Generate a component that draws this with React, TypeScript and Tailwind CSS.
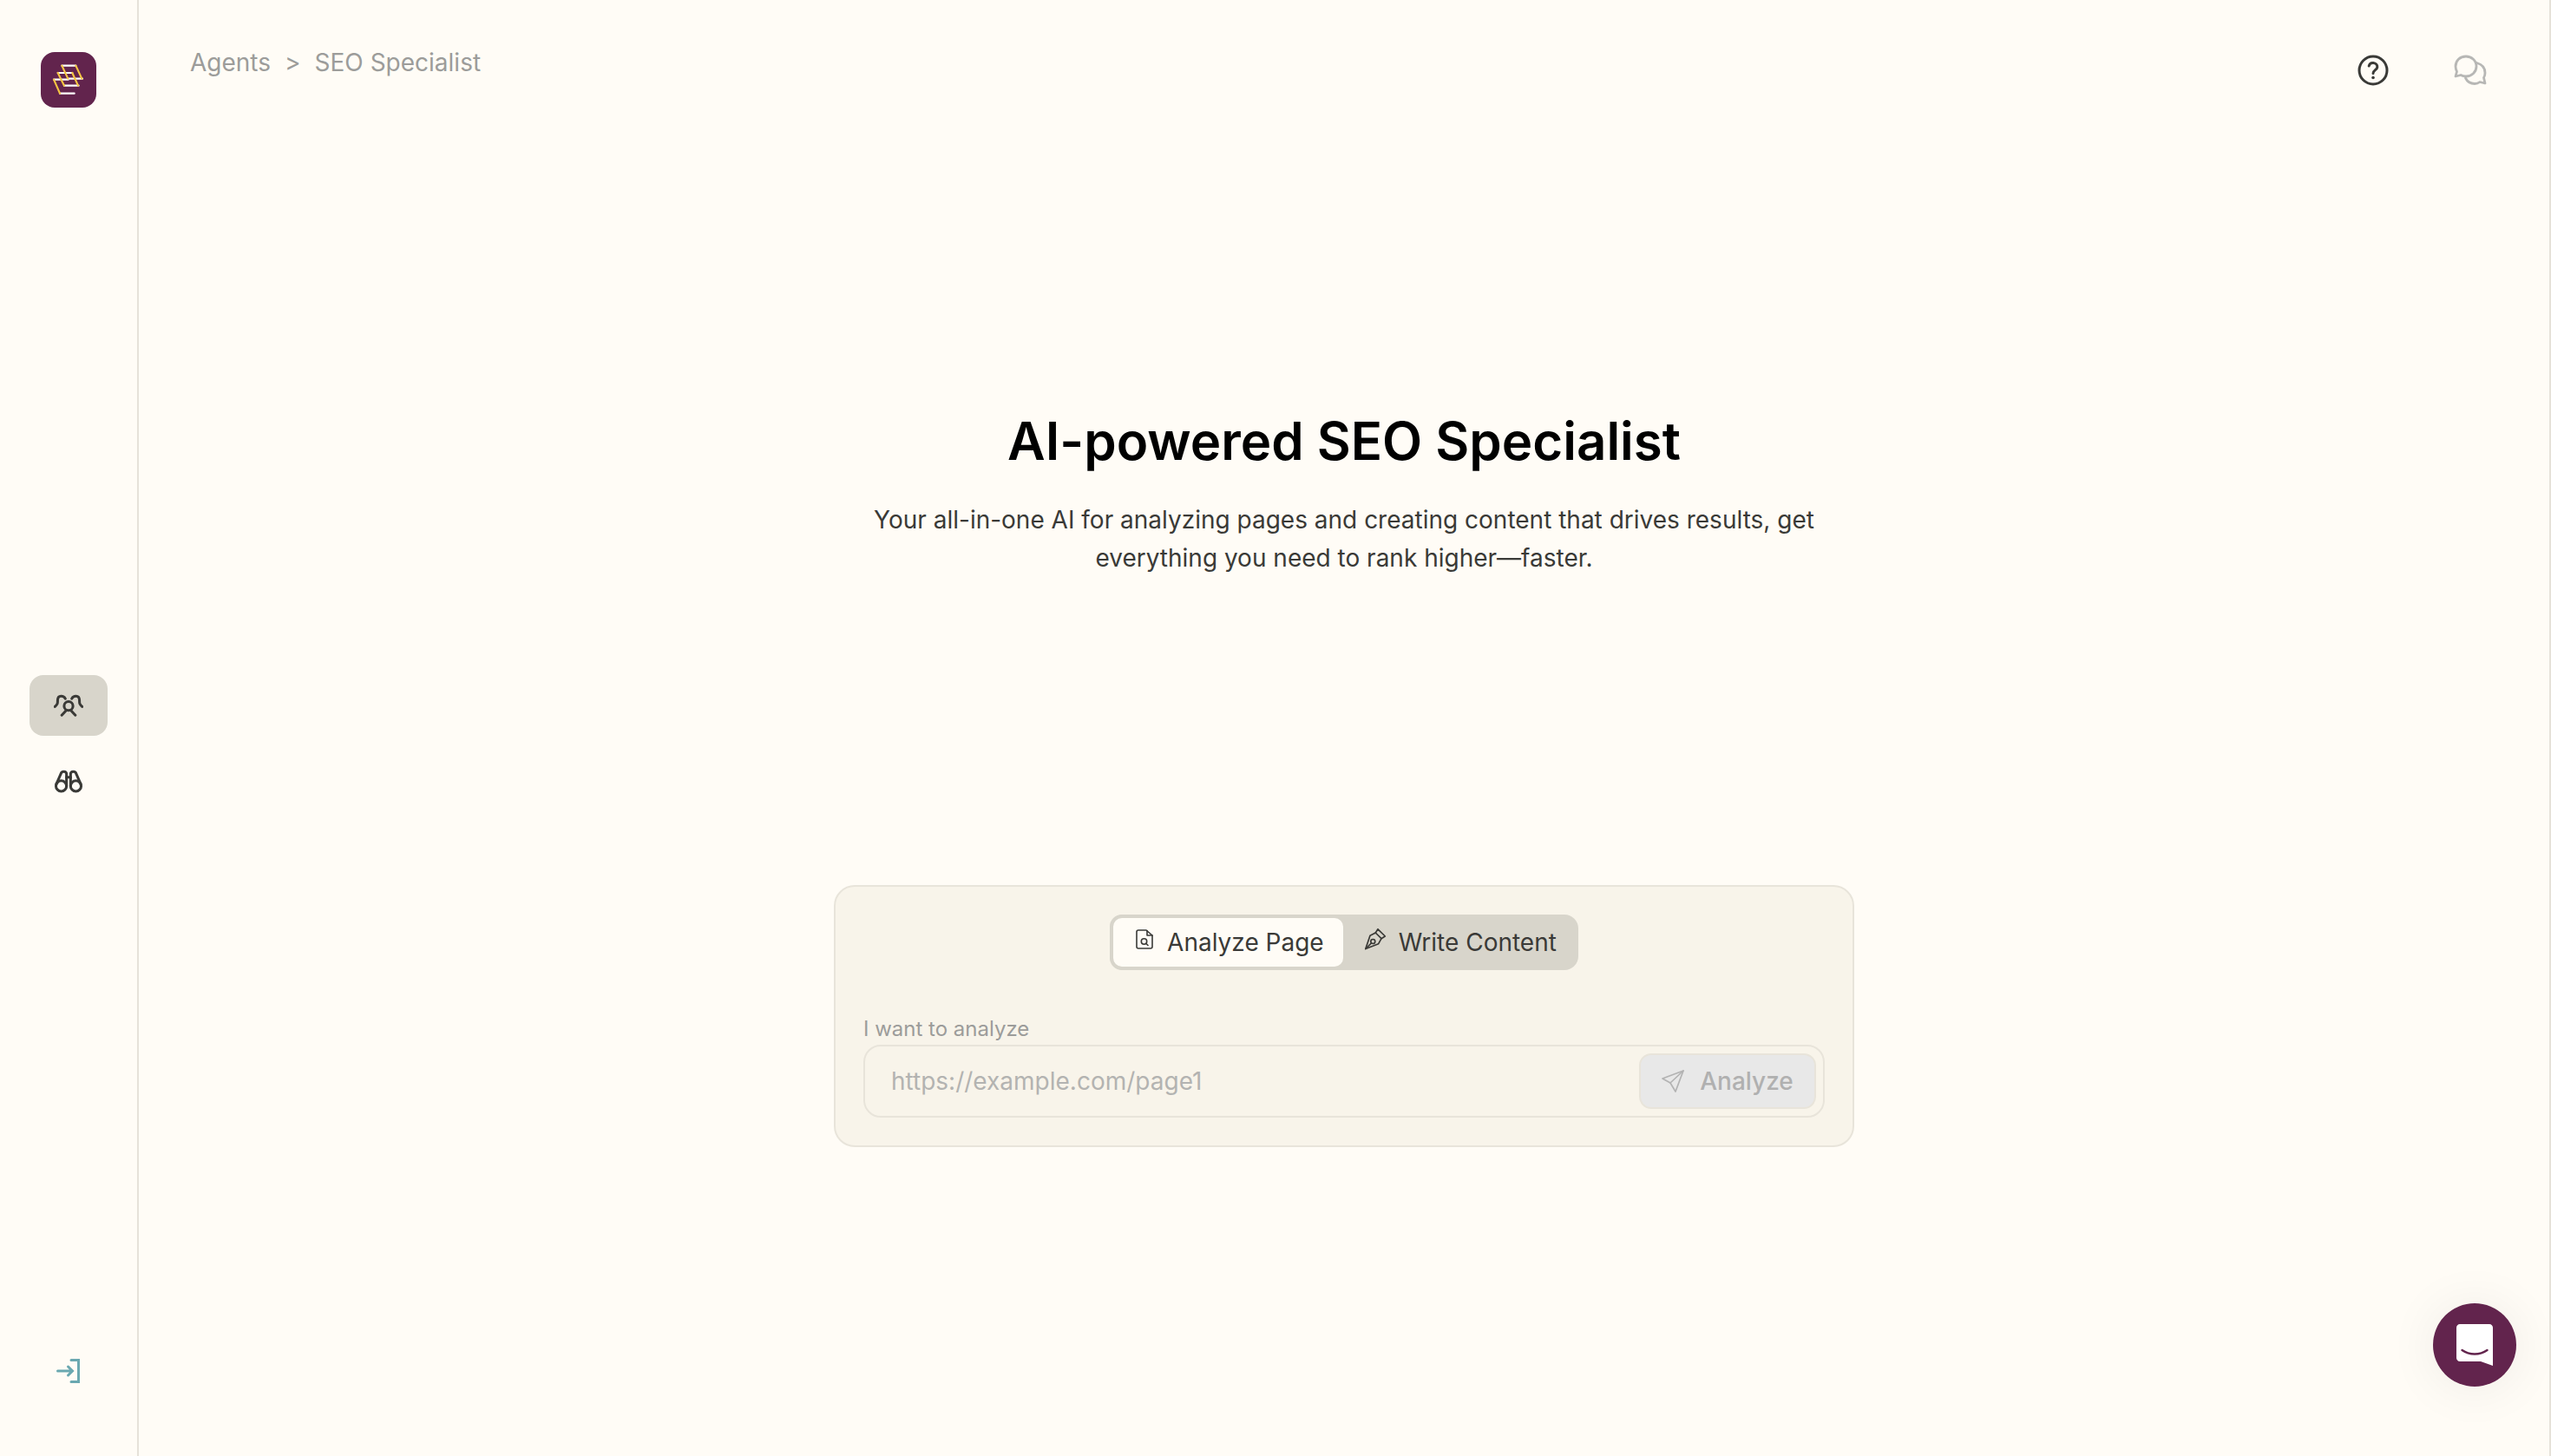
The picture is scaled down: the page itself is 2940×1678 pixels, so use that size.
function Logo() {
  return (
    <div className="w-16 h-16 rounded-[16px] bg-[#62244d] shrink-0">
      <svg viewBox="51 60 192 192" className="w-16 h-16" fill="none" strokeWidth="6.5" strokeLinecap="round">
        <g stroke="#ffffff">
          <path d="M124 107H172M145 152H195" />
          <path d="M110 132H160M132 176H182" />
          <path d="M96 155H146M117 203H167" />
        </g>
        <g stroke="#f5c542">
          <path d="M124 107L145 152M172 107L193 152" />
          <path d="M110 132L132 176M160 132L180 176" />
          <path d="M96 155L117 203" />
        </g>
      </svg>
    </div>
  );
}

function UsersIcon() {
  return (
    <svg viewBox="190 145 100 76" className="w-[34px] h-[26px]" fill="none" stroke="#3a3a37" strokeWidth="9" strokeLinecap="round">
      <circle cx="240" cy="185" r="15" />
      <path d="M217 216L232 200M263 216L248 200" />
      <path d="M229 160C224 150 204 146 203 165C203 175 204 178 194 187" />
      <path d="M251 160C256 150 276 146 277 165C277 175 276 178 286 187" />
    </svg>
  );
}

function BinocularsIcon() {
  return (
    <svg viewBox="190 410 100 80" className="w-[34px] h-[27px]" fill="none" stroke="#3a3a37" strokeWidth="9" strokeLinecap="round" strokeLinejoin="round">
      <circle cx="215" cy="466" r="18" />
      <circle cx="265" cy="466" r="18" />
      <path d="M198 460L214 424C216 414 232 414 233 424V466" />
      <path d="M282 460L266 424C264 414 248 414 247 424V466" />
      <path d="M233 436H247" />
    </svg>
  );
}

function LoginIcon() {
  return (
    <svg viewBox="0 0 28 28" className="w-7 h-7" fill="none" stroke="#6aa8b0" strokeWidth="3" strokeLinecap="round" strokeLinejoin="miter">
      <path d="M1.500 14H18M13.500 9L18.500 14L13.500 19" />
      <path d="M17 1.500H25.500V26.500H17" />
    </svg>
  );
}

function ChatsIcon() {
  return (
    <svg viewBox="0 0 38 36" className="w-[38px] h-[36px]" fill="none" stroke="#b7b7b5" strokeWidth="2.800" strokeLinejoin="round" strokeLinecap="round">
      <path d="M14 2C7 2 2 7 2 13.500C2 16 2.800 18 3.500 19.500L2 25L8 23.500C10 24.600 12 25 14 25C20.500 25 26 20 26 13.500C26 7 20.500 2 14 2Z" />
      <path d="M26.500 9.500C32 11 36 15 36 21C36 23 35.500 25 34.500 26.500L36 33L30 31.500C28 33 26 33.500 24 33.500C19.500 33.500 15.500 31 13.500 27" />
    </svg>
  );
}

function HelpIcon() {
  return (
    <svg viewBox="0 0 40 40" className="h-10 w-10" fill="none" stroke="#3a3a37" strokeWidth="3" strokeLinecap="round" strokeLinejoin="round">
      <circle cx="20" cy="20" r="16" />
      <path d="M15.200 15C15.800 12.400 18 11.300 20.200 11.500C23 11.800 25 13.700 24.800 16.300C24.600 19.500 20 20 20 23.500" />
      <path d="M20 28.500H20.020" strokeWidth="3.600" />
    </svg>
  );
}

function DocSearchIcon() {
  return (
    <svg viewBox="0 0 20 23" className="mb-2 w-5 h-[23px]" fill="none" stroke="#3a3a37" strokeWidth="1.600" strokeLinejoin="round" strokeLinecap="round">
      <path d="M12 1H3C1.900 1 1 1.900 1 3V20C1 21.100 1.900 22 3 22H17C18.100 22 19 21.100 19 20V7L12 1Z" />
      <path d="M13 1.500V7H19" />
      <circle cx="9.500" cy="14" r="3.200" />
      <path d="M12 16.500L14 18.500" />
    </svg>
  );
}

function PenIcon() {
  return (
    <svg viewBox="0 0 25 25" className="mb-2 w-[25px] h-[25px]" fill="none" stroke="#3a3a37" strokeWidth="1.700" strokeLinejoin="round" strokeLinecap="round">
      <path d="M0.800 23.500L6 8.300L12.300 5L19 11.700L15.700 17.700L0.800 23.500Z" />
      <path d="M12.300 5L15 0.800L23.300 9L19 11.700" />
      <path d="M0.800 23.500L7.500 16.800" />
      <circle cx="9.300" cy="15" r="2.500" />
    </svg>
  );
}

function IntercomIcon() {
  return (
    <svg viewBox="0 0 42 48" className="w-[42px] h-[48px]">
      <path fill="#ffffff" d="M4 0H38C40.200 0 42 1.800 42 4V48L28 43H4C1.800 43 0 41.200 0 39V4C0 1.800 1.800 0 4 0Z" />
      <path fill="none" stroke="#62244d" strokeWidth="2.400" strokeLinecap="round" d="M6.500 30C15 36 27 36 35.500 30" />
    </svg>
  );
}

export default function App() {
  return (
    <div className="relative flex h-[1678px] w-[2940px] overflow-hidden bg-[#fffcf6] text-[#3a3a37] font-['Inter',sans-serif]">
      <aside className="flex w-[160px] shrink-0 flex-col items-center border-r-2 border-[#e6e2d9] pt-[60px] pb-[84px]">
        <Logo />
        <nav className="mt-[654px] flex flex-col gap-[17px]">
          <button className="flex h-[70px] w-[90px] items-center justify-center rounded-[16px] bg-[#d8d5cb]">
            <UsersIcon />
          </button>
          <button className="flex h-[70px] w-[90px] items-center justify-center rounded-[16px]">
            <BinocularsIcon />
          </button>
        </nav>
        <button className="mt-auto flex h-7 w-7 items-center justify-center">
          <LoginIcon />
        </button>
      </aside>

      <div className="flex min-w-0 flex-1 flex-col border-r-2 border-[#e6e2d9]">
        <header className="flex h-[160px] shrink-0 items-start justify-between pl-[59px] pr-[72px]">
          <div className="flex items-center gap-[16px] pt-[54px] text-[28px] leading-[36px] text-[#9c9c9a]">
            <span>Agents</span>
            <span>&gt;</span>
            <span>SEO Specialist</span>
          </div>
          <div className="flex items-center gap-[73px] pt-[61px]">
            <HelpIcon />
            <ChatsIcon />
          </div>
        </header>

        <main className="flex flex-1 flex-col items-center">
          <h1 className="mt-[314px] text-[60px] font-semibold leading-[68px] text-black">
            AI-powered SEO Specialist
          </h1>
          <p className="mt-[35px] w-[1176px] text-center text-[28px] leading-[44px] text-[#3a3a37]">
            Your all-in-one AI for analyzing pages and creating content that drives results, get
            <br />
            everything you need to rank higher—faster.
          </p>

          <section className="mt-[355px] w-[1176px] rounded-[24px] border-2 border-[#e8e4da] bg-[#f8f4ea] px-[32px] pt-[32px] pb-[32px]">
            <div className="flex justify-center">
              <div className="flex h-16 rounded-[16px] bg-[#d8d5cb]">
                <div className="flex items-center gap-4 rounded-[14px] border-4 border-[#d8d5cb] bg-[#fffcf6] pl-[26px] pr-[22px] text-[28px]">
                  <DocSearchIcon />
                  <span>Analyze Page</span>
                </div>
                <div className="flex items-center gap-[14px] pl-[21px] pr-[25px] text-[28px]">
                  <PenIcon />
                  <span>Write Content</span>
                </div>
              </div>
            </div>

            <label className="mt-[50px] block text-[24px] leading-[36px] text-[#9c9c9a]">I want to analyze</label>
            <div className="flex h-[84px] items-center justify-between rounded-[20px] border-2 border-[#e8e4da] pl-[30px] pr-[8px]">
              <span className="text-[28px] text-[#b3b3b1]">https://example.com/page1</span>
              <button className="flex h-16 w-[204px] items-center justify-center gap-[18px] rounded-[14px] border-2 border-[#e8e4da] bg-[#e8e8e8] text-[28px] font-medium text-[#b0b0b0]">
                <svg viewBox="0 0 26 26" className="h-[26px] w-[26px]" fill="none" stroke="#b3b3b3" strokeWidth="1.700" strokeLinejoin="round" strokeLinecap="round">
                  <path d="M25 1L1 10L10 15L16 25L25 1Z" />
                  <path d="M10 15L25 1" />
                </svg>
                <span>Analyze</span>
              </button>
            </div>
          </section>
        </main>
      </div>

      <button className="absolute left-[2804px] top-[1502px] flex h-24 w-24 items-center justify-center rounded-full bg-[#62244d] shadow-[0_2px_60px_rgba(0,0,0,0.07)]">
        <IntercomIcon />
      </button>
    </div>
  );
}
